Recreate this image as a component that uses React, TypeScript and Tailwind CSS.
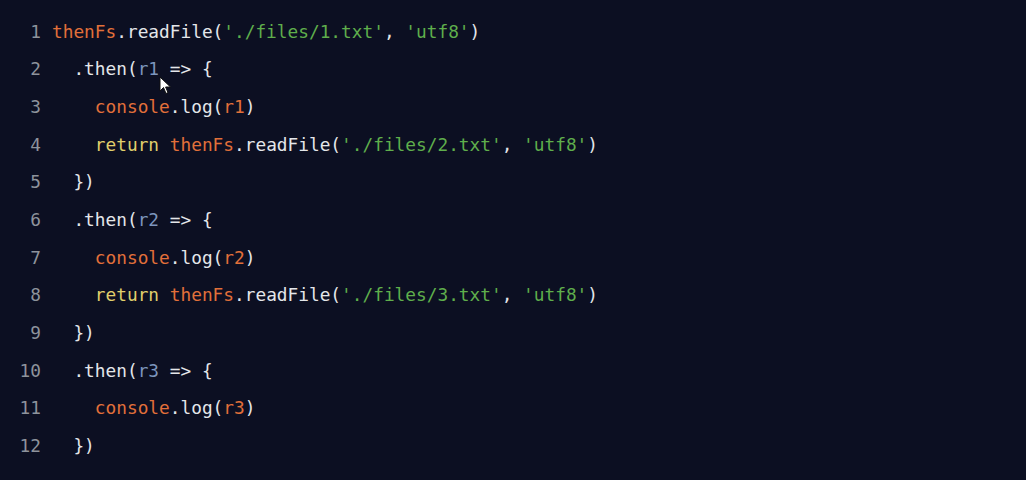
import React from 'react';

type Tok = { t: string; c?: string };

const O = 'text-[#e2703a]';
const Y = 'text-[#e0cf6c]';
const G = 'text-[#5fae4c]';
const B = 'text-[#7d95bd]';

const lines: Tok[][] = [
    [{ t: 'thenFs', c: O }, { t: '.readFile(' }, { t: "'./files/1.txt'", c: G }, { t: ', ' }, { t: "'utf8'", c: G }, { t: ')' }],
    [{ t: '  .then(' }, { t: 'r1', c: B }, { t: ' => {' }],
    [{ t: '    ' }, { t: 'console', c: O }, { t: '.log(' }, { t: 'r1', c: O }, { t: ')' }],
    [{ t: '    ' }, { t: 'return', c: Y }, { t: ' ' }, { t: 'thenFs', c: O }, { t: '.readFile(' }, { t: "'./files/2.txt'", c: G }, { t: ', ' }, { t: "'utf8'", c: G }, { t: ')' }],
    [{ t: '  })' }],
    [{ t: '  .then(' }, { t: 'r2', c: B }, { t: ' => {' }],
    [{ t: '    ' }, { t: 'console', c: O }, { t: '.log(' }, { t: 'r2', c: O }, { t: ')' }],
    [{ t: '    ' }, { t: 'return', c: Y }, { t: ' ' }, { t: 'thenFs', c: O }, { t: '.readFile(' }, { t: "'./files/3.txt'", c: G }, { t: ', ' }, { t: "'utf8'", c: G }, { t: ')' }],
    [{ t: '  })' }],
    [{ t: '  .then(' }, { t: 'r3', c: B }, { t: ' => {' }],
    [{ t: '    ' }, { t: 'console', c: O }, { t: '.log(' }, { t: 'r3', c: O }, { t: ')' }],
    [{ t: '  })' }],
];

export default function App() {
    return (
        <div className="relative w-[1026px] h-[480px] bg-[#0c0f22] overflow-hidden pt-[13px] font-['DejaVu_Sans_Mono',monospace] text-[17.8px]">
            {lines.map((line, i) => (
                <div key={i} className="flex h-[37.7px] items-center whitespace-pre">
                    <span className="w-[41px] text-right text-[#8e939c]">{i + 1}</span>
                    <span className="ml-[11px] text-[#e4e6ea]">
                        {line.map((tok, j) => (
                            <span key={j} className={tok.c}>{tok.t}</span>
                        ))}
                    </span>
                </div>
            ))}
            {/* mouse pointer */}
            <svg className="absolute left-[159px] top-[76px]" width="13" height="19" viewBox="0 0 13 19">
                <path d="M1 1 L1 15 L4.5 11.5 L7 17.5 L9 16.6 L6.6 11 L11.5 11 Z" fill="#ffffff" stroke="#111" strokeWidth="1" />
            </svg>
        </div>
    );
}
